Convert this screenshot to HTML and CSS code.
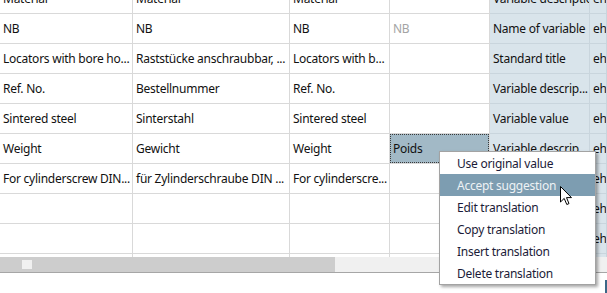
FILE: index.html
```html
<!DOCTYPE html>
<html lang="en">
<head>
  <meta charset="UTF-8" />
  <title>Translation grid</title>
  <link rel="stylesheet" href="styles.css">
</head>
<body>
<div class="view">
  <div class="grid-clip">
    <div class="grid">
      <div class="cell">Material</div>
      <div class="cell">Material</div>
      <div class="cell">Material</div>
      <div class="cell"></div>
      <div class="cell meta">Variable description</div>
      <div class="cell meta">eh_</div>

      <div class="cell">NB</div>
      <div class="cell">NB</div>
      <div class="cell">NB</div>
      <div class="cell hint">NB</div>
      <div class="cell meta">Name of variable</div>
      <div class="cell meta">eh_</div>

      <div class="cell">Locators with bore ho...</div>
      <div class="cell">Raststücke anschraubbar, ...</div>
      <div class="cell">Locators with b...</div>
      <div class="cell"></div>
      <div class="cell meta">Standard title</div>
      <div class="cell meta">eh_</div>

      <div class="cell">Ref. No.</div>
      <div class="cell">Bestellnummer</div>
      <div class="cell">Ref. No.</div>
      <div class="cell"></div>
      <div class="cell meta">Variable descrip...</div>
      <div class="cell meta">eh_</div>

      <div class="cell">Sintered steel</div>
      <div class="cell">Sinterstahl</div>
      <div class="cell">Sintered steel</div>
      <div class="cell"></div>
      <div class="cell meta">Variable value</div>
      <div class="cell meta">eh_</div>

      <div class="cell">Weight</div>
      <div class="cell">Gewicht</div>
      <div class="cell">Weight</div>
      <div class="cell selected"><div class="focus">Poids</div></div>
      <div class="cell meta">Variable descrip...</div>
      <div class="cell meta">eh_</div>

      <div class="cell">For cylinderscrew DIN...</div>
      <div class="cell">für Zylinderschraube DIN ...</div>
      <div class="cell">For cylinderscre...</div>
      <div class="cell"></div>
      <div class="cell meta">Variable descrip...</div>
      <div class="cell meta">eh_</div>

      <div class="cell"></div>
      <div class="cell"></div>
      <div class="cell"></div>
      <div class="cell"></div>
      <div class="cell meta"></div>
      <div class="cell meta">eh_</div>

      <div class="cell"></div>
      <div class="cell"></div>
      <div class="cell"></div>
      <div class="cell"></div>
      <div class="cell meta"></div>
      <div class="cell meta">eh_</div>

      <div class="cell"></div>
      <div class="cell"></div>
      <div class="cell"></div>
      <div class="cell"></div>
      <div class="cell meta"></div>
      <div class="cell meta"></div>
    </div>
  </div>

  <div class="hscroll">
    <div class="thumb"><span class="grip"></span></div>
  </div>

  <div class="footer">
    <div class="corner"></div>
  </div>

  <!-- context menu for the focused cell -->
  <ul class="menu">
    <li>Use original value</li>
    <li class="active">Accept suggestion</li>
    <li>Edit translation</li>
    <li>Copy translation</li>
    <li>Insert translation</li>
    <li>Delete translation</li>
  </ul>

  <svg class="cursor" width="13" height="20" viewBox="0 0 13 20">
    <path d="M0.5 0.5 L0.5 16 L4.2 12.4 L6.8 18.5 L9 17.6 L6.5 11.6 L11.5 11.6 Z" fill="#fff" stroke="#000" stroke-width="1" stroke-linejoin="miter"/>
  </svg>
</div>
</body>
</html>
```

FILE: styles.css
```css
html, body {
  margin: 0;
  padding: 0;
  background: #fff;
  overflow: hidden;
}

body {
  font-family: "Noto Sans", "Open Sans", sans-serif;
  font-size: 12px;
  letter-spacing: -0.25px;
  color: #111;
}

.view {
  position: relative;
  width: 607px;
  height: 293px;
  overflow: hidden;
}

.grid-clip {
  height: 257px;
  overflow: hidden;
}

/* grid is scrolled a bit, first row is cut off */
.grid {
  display: grid;
  grid-template-columns: 133px 157px 100px 100px 100px 1fr;
  grid-auto-rows: 30px;
  margin-top: -16px;
}

.cell {
  box-sizing: border-box;
  border-right: 1px solid #d9d9d9;
  border-bottom: 1px solid #d9d9d9;
  padding: 0 3px;
  line-height: 30px;
  white-space: nowrap;
  overflow: hidden;
}

.cell.meta {
  background: #d9e4eb;
  border-right-color: #c9d5dd;
  border-bottom-color: #c9d5dd;
}

.cell.hint {
  color: #a4a4a4;
}

.cell.selected {
  padding: 0;
}

.focus {
  box-sizing: border-box;
  height: 29px;
  line-height: 28px;
  padding-left: 2px;
  background: #a2b9c6;
  border: 1px dotted #3a3a3a;
}

.hscroll {
  display: flex;
  height: 15px;
  background: #f0f0f0;
  border-bottom: 1px solid #a6a6a6;
}

.thumb {
  width: 335px;
  background: #cdcdcd;
  padding: 3px 0 0 22px;
  box-sizing: border-box;
}

.grip {
  display: block;
  width: 10px;
  height: 9px;
  background: #f0f0f0;
}

.footer {
  display: flex;
  justify-content: flex-end;
  padding-top: 7px;
}

.corner {
  width: 2px;
  height: 14px;
  background: #3c6787;
}

.menu {
  position: absolute;
  left: 439px;
  top: 151px;
  width: 157px;
  box-sizing: border-box;
  margin: 0;
  padding: 0;
  list-style: none;
  background: #fff;
  border: 1px solid #a3a3a3;
  box-shadow: 2px 2px 3px rgba(0, 0, 0, 0.35);
  color: #1b1b38;
}

.menu li {
  height: 22px;
  line-height: 23px;
  padding-left: 17px;
}

.menu li.active {
  background: #7d9db1;
  color: #eef2f5;
}

.cursor {
  position: absolute;
  left: 560px;
  top: 186px;
}
```
